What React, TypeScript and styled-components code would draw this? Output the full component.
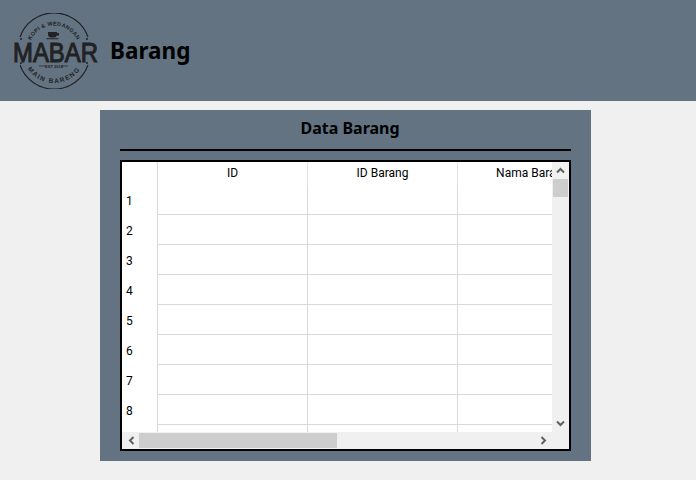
import React from "react";
import styled, { createGlobalStyle } from "styled-components";

const Global = createGlobalStyle`
  html, body { margin: 0; padding: 0; background: #f0f0f0; }
  #root { width: 696px; height: 480px; overflow: hidden; }
  * { box-sizing: border-box; }
`;
const Page = styled.div`
  width: 696px; height: 480px; display: flex; flex-direction: column;
  font-family: "Noto Sans", "Open Sans", sans-serif; color: #000;
`;
const Header = styled.header`
  width: 100%; height: 101px; background: #647382; display: flex; align-items: center;
  padding: 0 0 0 12px; gap: 11px; flex: none;
`;
const PageTitle = styled.h1`
  margin: 0; font-size: 22.5px; line-height: 28px; font-weight: 700; color: #000;
`;
const Panel = styled.section`
  width: 491px; height: 351px; margin: 9px 0 0 100px; background: #647382; padding: 0 20px; flex: none;
  display: flex; flex-direction: column;
`;
const PanelTitle = styled.h2`
  margin: 0; height: 39px; padding-left: 9px; font-size: 16px; line-height: 37px; font-weight: 700; text-align: center;
`;
const Divider = styled.div`
  height: 2px; background: #000; flex: none;
`;
const Frame = styled.div`
  margin-top: 9px; height: 291px; border: 2px solid #000; background: #f0f0f0;
  display: grid; grid-template-columns: 430px 17px; grid-template-rows: 270px 17px;
  font-family: Roboto, "Noto Sans", sans-serif;
`;
const Viewport = styled.div`
  background: #fff; overflow: hidden; display: grid;
  grid-template-columns: 36px repeat(3, 150px); grid-auto-rows: 30px; grid-template-rows: 23px;
`;
const Corner = styled.div`
  border-right: 1px solid #d9d9d9;
`;
const ColHead = styled.div`
  border-right: 1px solid #e4e4e4; font-size: 12px; line-height: 22px; text-align: center; white-space: nowrap;
`;
const RowHead = styled.div`
  border-right: 1px solid #d9d9d9; font-size: 12px; padding: 8px 0 0 4px; line-height: 17px;
`;
const Cell = styled.div`
  border-right: 1px solid #d9d9d9; border-bottom: 1px solid #d9d9d9;
`;
const VBar = styled.div`
  display: flex; flex-direction: column; align-items: center; padding: 0 1px;
`;
const HBar = styled.div`
  display: flex; align-items: center; padding: 1px 0; grid-column: 1 / -1;
`;
const ArrowBox = styled.div<{ $w: number; $h: number }>`
  width: ${p => p.$w}px; height: ${p => p.$h}px; flex: none; display: flex; align-items: center; justify-content: center;
`;
const LeftArrowBox = styled(ArrowBox)`
  padding-left: 2px;
`;
const VThumb = styled.div`
  width: 100%; height: 18px; background: #cdcdcd; flex: none;
`;
const HThumb = styled.div`
  width: 198px; height: 15px; background: #cdcdcd; flex: none;
`;
const Spacer = styled.div`
  flex: 1;
`;

const Chevron = ({ dir }: { dir: "up" | "down" | "left" | "right" }) => {
  const rot = { up: 0, right: 90, down: 180, left: 270 }[dir];
  return (
    <svg width="9" height="9" viewBox="0 0 9 9" style={{ transform: `rotate(${rot}deg)` }}>
      <path d="M1 6.5 L4.5 3 L8 6.5" fill="none" stroke="#606060" strokeWidth="2" />
    </svg>
  );
};

const Logo = () => (
  <svg width="87" height="76" viewBox="0 0 87 76">
    <defs>
      <path id="arcTop" d="M16.5 38 A 25.5 25.5 0 0 1 67.5 38" />
      <path id="arcBottom" d="M10 38 A 32 32 0 0 0 74 38" />
    </defs>
    <g fill="none" stroke="#222" strokeWidth="1.1">
      <path d="M8 24 A 36 36 0 0 1 76 24" />
      <path d="M8 52 A 36 36 0 0 0 76 52" />
    </g>
    <g fill="#222">
      <circle cx="9" cy="26" r="1" /><circle cx="75" cy="26" r="1" />
      <circle cx="9" cy="50" r="1" /><circle cx="75" cy="50" r="1" />
    </g>
    <text fontFamily="Liberation Sans, sans-serif" fontSize="5.5" fontWeight="700" fill="#222" letterSpacing="0.25">
      <textPath href="#arcTop" startOffset="50%" textAnchor="middle">KOPI &amp; WEDANGAN</textPath>
    </text>
    <text fontFamily="Liberation Sans, sans-serif" fontSize="6.5" fontWeight="700" fill="#222" letterSpacing="1.4">
      <textPath href="#arcBottom" startOffset="50%" textAnchor="middle">MAIN BARENG</textPath>
    </text>
    <path d="M36 19 h9 v2 a3.5 3.5 0 0 1 -3.5 3.5 h-2 a3.5 3.5 0 0 1 -3.5 -3.5z M45 20 h2 v2.5 h-2.5 M34 25.2 h13 l-1 1 h-11z" fill="#222" />
    <text x="43.5" y="49" textAnchor="middle" fontFamily="Liberation Sans, sans-serif" fontSize="28" fontWeight="400" fill="#222" stroke="#222" strokeWidth="1.1" textLength="85" lengthAdjust="spacingAndGlyphs">MABAR</text>
    <path d="M27 53 h6 M50 53 h6" stroke="#222" strokeWidth="0.7" />
    <text x="42" y="54.5" textAnchor="middle" fontFamily="Liberation Sans, sans-serif" fontSize="4" fontWeight="700" fill="#222">EST 2018</text>
  </svg>
);

const rows = [1, 2, 3, 4, 5, 6, 7, 8, 9];

export default function App() {
  return (
    <Page>
      <Global />
      <Header>
        <Logo />
        <PageTitle>Barang</PageTitle>
      </Header>
      <Panel>
        <PanelTitle>Data Barang</PanelTitle>
        <Divider />
        <Frame>
          <Viewport>
            <Corner />
            <ColHead>ID</ColHead>
            <ColHead>ID Barang</ColHead>
            <ColHead>Nama Barang</ColHead>
            {rows.map(r => (
              <React.Fragment key={r}>
                <RowHead>{r <= 8 ? r : ""}</RowHead>
                <Cell />
                <Cell />
                <Cell />
              </React.Fragment>
            ))}
          </Viewport>
          <VBar>
            <ArrowBox $w={15} $h={17}><Chevron dir="up" /></ArrowBox>
            <VThumb />
            <Spacer />
            <ArrowBox $w={15} $h={17}><Chevron dir="down" /></ArrowBox>
          </VBar>
          <HBar>
            <LeftArrowBox $w={17} $h={15}><Chevron dir="left" /></LeftArrowBox>
            <HThumb />
            <Spacer />
            <ArrowBox $w={17} $h={15}><Chevron dir="right" /></ArrowBox>
            <ArrowBox $w={17} $h={15} />
          </HBar>
        </Frame>
      </Panel>
    </Page>
  );
}
